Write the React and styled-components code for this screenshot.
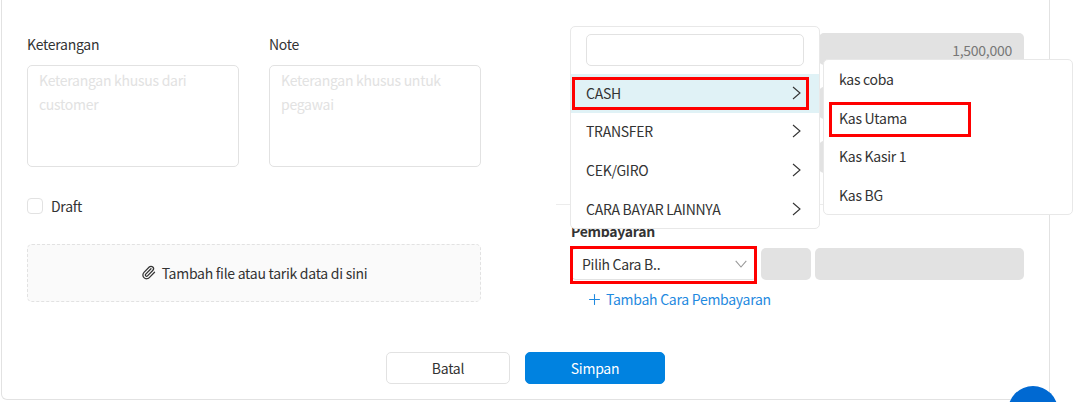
import React from "react";
import styled, { createGlobalStyle } from "styled-components";
import { Paperclip, Plus } from "lucide-react";

const GlobalStyle = createGlobalStyle`
  html, body {
    margin: 0;
    padding: 0;
    height: 402px;
    overflow: hidden;
    background: #ffffff;
    font-family: "Noto Sans CJK SC", "Noto Sans", sans-serif;
    font-size: 14px;
    letter-spacing: -0.27px;
    color: #333333;
  }
`;

const Page = styled.div`
  position: relative;
  width: 1079px;
  height: 402px;
  overflow: hidden;
`;

const Card = styled.div`
  box-sizing: border-box;
  width: 1049px;
  height: 400px;
  margin-left: 1px;
  padding: 37px 25px 0;
  border: 1px solid #e2e2e2;
  border-top: 0;
  border-radius: 0 0 6px 6px;
  display: flex;
  flex-direction: column;
`;

const Columns = styled.div`
  display: flex;
  height: 315px;
`;

const LeftColumn = styled.div`
  width: 454px;
  display: flex;
  flex-direction: column;
`;

const NoteRow = styled.div`
  display: flex;
  gap: 30px;
`;

const Field = styled.div`
  width: 212px;
`;

const Label = styled.div`
  height: 16px;
  line-height: 16px;
  margin: -1px 0 13px;
`;

const TextArea = styled.textarea`
  display: block;
  box-sizing: border-box;
  width: 212px;
  height: 102px;
  padding: 2px 11px;
  margin: 0;
  border: 1px solid #e2e2e2;
  border-radius: 5px;
  font: inherit;
  letter-spacing: inherit;
  line-height: 24px;
  resize: none;
  outline: none;
  &::placeholder {
    color: #e2e2e2;
    opacity: 1;
  }
`;

const DraftRow = styled.label`
  display: flex;
  align-items: center;
  gap: 8px;
  margin-top: 31px;
  height: 16px;
`;

const CheckBox = styled.span`
  box-sizing: border-box;
  width: 16px;
  height: 16px;
  border: 1px solid #e2e2e2;
  border-radius: 4px;
`;

const DropZone = styled.div`
  box-sizing: border-box;
  height: 58px;
  margin-top: 30px;
  display: flex;
  align-items: center;
  justify-content: center;
  gap: 6px;
  border: 1px dashed #e2e2e2;
  border-radius: 5px;
  background: #fafafa;
  svg {
    transform: translateY(-1px);
  }
`;

const RightColumn = styled.div`
  position: relative;
  margin: -4px 0 0 90px;
  width: 453px;
  display: flex;
  flex-direction: column;
`;

const AmountList = styled.div`
  display: flex;
  flex-direction: column;
  align-items: flex-end;
  gap: 22px;
`;

const GreyField = styled.div`
  box-sizing: border-box;
  width: ${(props) => props.$width || "205px"};
  height: 32px;
  padding-right: 12px;
  border-radius: 5px;
  background: #e2e2e2;
  color: #777777;
  line-height: 34px;
  text-align: right;
`;

const Divider = styled.div`
  height: 1px;
  margin: 31px 0 0 -15px;
  width: 270px;
  background: #ececec;
`;

const SectionTitle = styled.div`
  margin-top: 18px;
  height: 16px;
  line-height: 16px;
  font-weight: 700;
`;

const PaymentRow = styled.div`
  display: flex;
  gap: 4px;
  margin-top: 9px;
`;

const SelectBox = styled.div`
  box-sizing: border-box;
  width: 186px;
  height: 32px;
  padding: 0 9px 0 10px;
  display: flex;
  align-items: center;
  justify-content: space-between;
  border: 1px solid #e2e2e2;
  border-radius: 5px;
  background: #ffffff;
`;

const AddPayment = styled.div`
  display: flex;
  align-items: center;
  gap: 3px;
  margin: 11px 0 0 15px;
  height: 16px;
  color: #1f8ae0;
`;

const Footer = styled.div`
  display: flex;
  justify-content: center;
  gap: 15px;
`;

const Button = styled.button`
  box-sizing: border-box;
  width: ${(props) => props.$width};
  height: 32px;
  padding: 0;
  border: 1px solid ${(props) => (props.$primary ? "#0082e0" : "#e2e2e2")};
  border-radius: 5px;
  background: ${(props) => (props.$primary ? "#0082e0" : "#ffffff")};
  color: ${(props) => (props.$primary ? "#ffffff" : "#333333")};
  font: inherit;
  letter-spacing: inherit;
`;

const Menu = styled.div`
  position: absolute;
  left: 570px;
  top: 26px;
  box-sizing: border-box;
  width: 250px;
  height: 203px;
  border: 1px solid #e8e8e8;
  border-radius: 5px;
  background: #ffffff;
`;

const SearchBox = styled.div`
  box-sizing: border-box;
  width: 218px;
  height: 32px;
  margin: 7px 0 8px 15px;
  border: 1px solid #e2e2e2;
  border-radius: 5px;
`;

const MenuItem = styled.div`
  box-sizing: border-box;
  height: 38.6px;
  padding: 0 18px 1px 15px;
  display: flex;
  align-items: center;
  justify-content: space-between;
  background: ${(props) => (props.$active ? "#e0f2f6" : "transparent")};
`;

const SubMenu = styled.div`
  position: absolute;
  left: 823px;
  top: 59px;
  box-sizing: border-box;
  width: 250px;
  height: 156px;
  padding: 0 15px;
  border: 1px solid #e8e8e8;
  border-radius: 5px;
  background: #ffffff;
`;

const SubItem = styled.div`
  height: 38.6px;
  line-height: 38px;
`;

const Highlight = styled.div`
  position: absolute;
  box-sizing: border-box;
  left: ${(props) => props.$left}px;
  top: ${(props) => props.$top}px;
  width: ${(props) => props.$width}px;
  height: ${(props) => props.$height}px;
  border: 3px solid #ff0000;
`;

const Fab = styled.div`
  position: absolute;
  left: 1008px;
  top: 386px;
  width: 50px;
  height: 50px;
  border-radius: 50%;
  background: #0069d2;
`;

const ArrowRight = () => (
  <svg width="9" height="14" viewBox="0 0 9 14" fill="none" stroke="#333333" strokeWidth="1.1">
    <path d="M1 1l7 6-7 6" />
  </svg>
);

const ArrowDown = () => (
  <svg width="12" height="8" viewBox="0 0 12 8" fill="none" stroke="#999999" strokeWidth="1.1">
    <path d="M0.7 0.8L6 7l5.3-6.2" />
  </svg>
);

const menuItems = ["CASH", "TRANSFER", "CEK/GIRO", "CARA BAYAR LAINNYA"];
const subItems = ["kas coba", "Kas Utama", "Kas Kasir 1", "Kas BG"];

const App = () => {
  return (
    <>
      <GlobalStyle />
      <Page>
        <Card>
          <Columns>
            <LeftColumn>
              <NoteRow>
                <Field>
                  <Label>Keterangan</Label>
                  <TextArea placeholder="Keterangan khusus dari customer" />
                </Field>
                <Field>
                  <Label>Note</Label>
                  <TextArea placeholder="Keterangan khusus untuk pegawai" />
                </Field>
              </NoteRow>
              <DraftRow>
                <CheckBox />
                Draft
              </DraftRow>
              <DropZone>
                <Paperclip size={15} color="#333333" />
                Tambah file atau tarik data di sini
              </DropZone>
            </LeftColumn>
            <RightColumn>
              <AmountList>
                <GreyField>1,500,000</GreyField>
                <GreyField />
                <GreyField />
              </AmountList>
              <Divider />
              <SectionTitle>Pembayaran</SectionTitle>
              <PaymentRow>
                <SelectBox>
                  Pilih Cara B..
                  <ArrowDown />
                </SelectBox>
                <GreyField $width="50px" />
                <GreyField $width="209px" />
              </PaymentRow>
              <AddPayment>
                <Plus size={17} strokeWidth={1.5} />
                Tambah Cara Pembayaran
              </AddPayment>
            </RightColumn>
          </Columns>
          <Footer>
            <Button $width="124px">Batal</Button>
            <Button $primary $width="140px">Simpan</Button>
          </Footer>
        </Card>
        <Menu>
          <SearchBox />
          {menuItems.map((item, i) => (
            <MenuItem key={item} $active={i === 0}>
              {item}
              <ArrowRight />
            </MenuItem>
          ))}
        </Menu>
        <SubMenu>
          {subItems.map((item) => (
            <SubItem key={item}>{item}</SubItem>
          ))}
        </SubMenu>
        <Highlight $left={572} $top={77} $width={237} $height={33} />
        <Highlight $left={829} $top={102} $width={142} $height={35} />
        <Highlight $left={570} $top={246} $width={187} $height={38} />
        <Fab />
      </Page>
    </>
  );
};

export default App;
